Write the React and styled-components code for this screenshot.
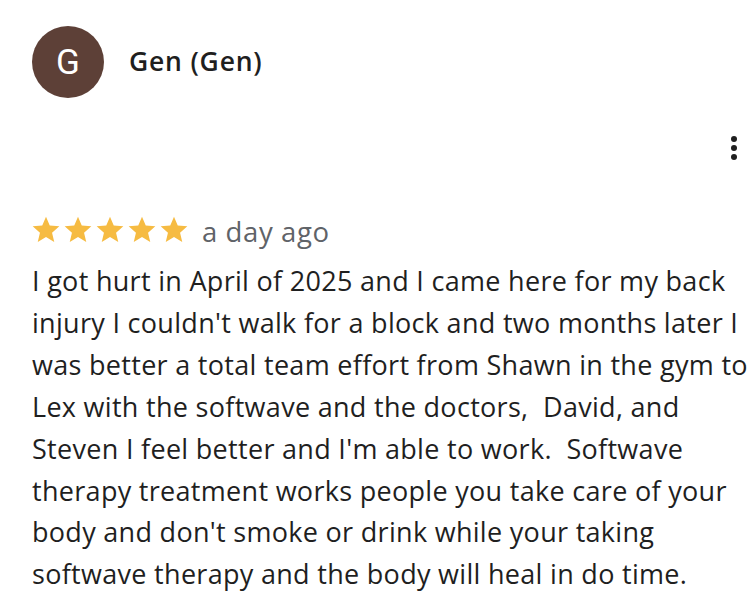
import React from "react";
import styled, { createGlobalStyle } from "styled-components";

const Global = createGlobalStyle`
  html, body { margin: 0; padding: 0; background: #fff; }
  body { font-family: "Open Sans", Roboto, Arial, sans-serif; }
`;

const Card = styled.div`
  width: 756px;
  height: 608px;
  box-sizing: border-box;
  padding: 26px 0 0 32px;
  display: flex;
  flex-direction: column;
  position: relative;
  overflow: hidden;
`;

const Header = styled.div`
  display: flex;
  align-items: center;
  gap: 25px;
`;

const Avatar = styled.div`
  width: 72px;
  height: 72px;
  border-radius: 50%;
  background: #5d4037;
  color: #fff;
  display: flex;
  align-items: center;
  justify-content: center;
  font-family: Roboto, "Open Sans", sans-serif;
  font-size: 35px;
  font-weight: 400;
`;

const Name = styled.div`
  font-size: 26.5px;
  font-weight: 600;
  letter-spacing: 0.8px;
  color: #1f1f1f;
  margin-top: -3px;
`;

const MenuRow = styled.div`
  display: flex;
  justify-content: flex-end;
  padding-right: 19px;
  margin-top: 38px;
`;

const Dots = styled.div`
  display: flex;
  flex-direction: column;
  gap: 3px;
  span {
    width: 6px;
    height: 6px;
    border-radius: 50%;
    background: #1f1f1f;
  }
`;

const RatingRow = styled.div`
  display: flex;
  align-items: center;
  margin-top: 50px;
  gap: 12px;
`;

const Stars = styled.div`
  display: flex;
  margin-left: -2px;
`;

const Time = styled.div`
  font-size: 27.5px;
  letter-spacing: 0.6px;
  color: #5f6368;
  margin-top: 3px;
`;

const Body = styled.div`
  margin-top: 10px;
  font-size: 27px;
  letter-spacing: 0.3px;
  line-height: 41.9px;
  color: #1f1f1f;
`;

const Line = styled.span`
  display: block;
  white-space: pre;
`;

const Star = () => (
  <svg width="32" height="32" viewBox="0 0 24 24">
    <path
      fill="#f6bb42"
      d="M12 17.27L18.18 21l-1.64-7.03L22 9.24l-7.19-.61L12 2 9.19 8.63 2 9.24l5.46 4.73L5.82 21z"
    />
  </svg>
);

const lines = [
  "I got hurt in April of 2025 and I came here for my back",
  "injury I couldn't walk for a block and two months later I",
  "was better a total team effort from Shawn in the gym to",
  "Lex with the softwave and the doctors,  David, and",
  "Steven I feel better and I'm able to work.  Softwave",
  "therapy treatment works people you take care of your",
  "body and don't smoke or drink while your taking",
  "softwave therapy and the body will heal in do time.",
];

export default function App() {
  return (
    <>
      <Global />
      <Card>
        <Header>
          <Avatar>G</Avatar>
          <Name>Gen (Gen)</Name>
        </Header>
        <MenuRow>
          <Dots>
            <span />
            <span />
            <span />
          </Dots>
        </MenuRow>
        <RatingRow>
          <Stars>
            {[0, 1, 2, 3, 4].map((i) => (
              <Star key={i} />
            ))}
          </Stars>
          <Time>a day ago</Time>
        </RatingRow>
        <Body>
          {lines.map((l, i) => (
            <Line key={i}>{l}</Line>
          ))}
        </Body>
      </Card>
    </>
  );
}
